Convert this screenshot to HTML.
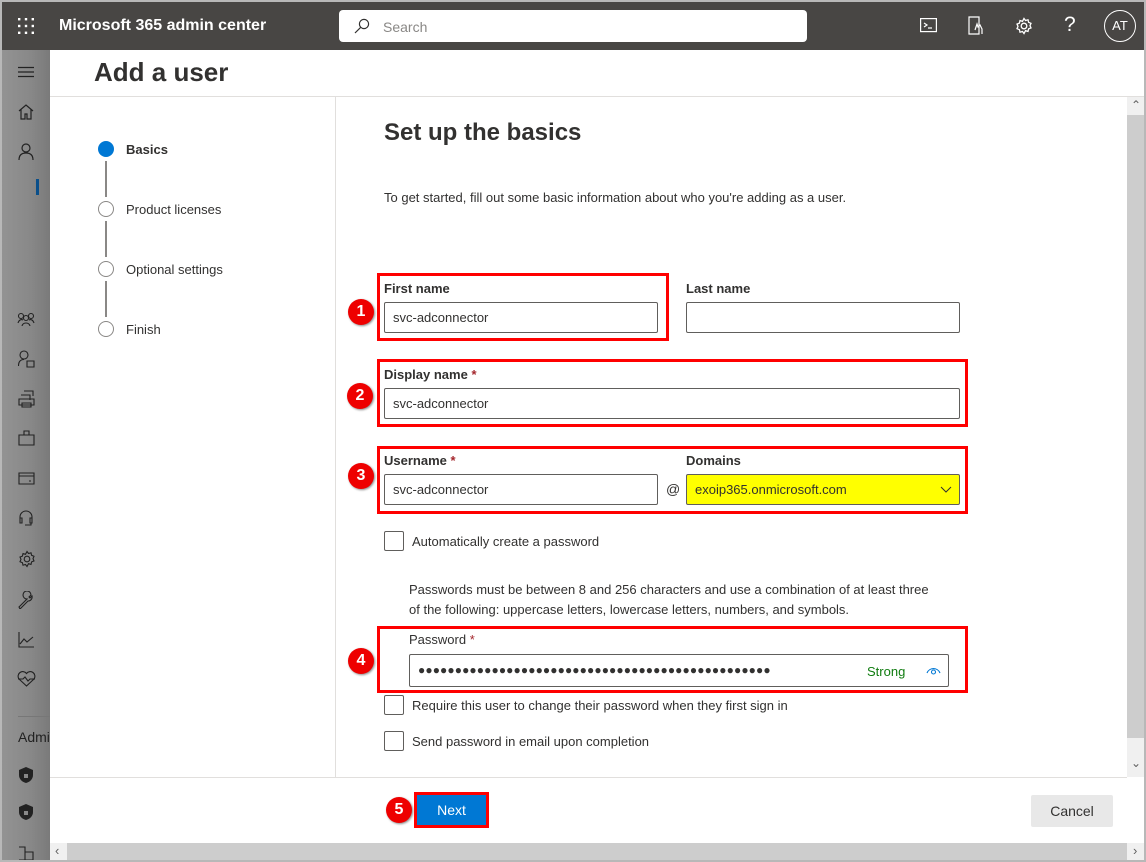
<!DOCTYPE html>
<html><head><meta charset="utf-8"><style>
*{box-sizing:border-box;margin:0;padding:0}
body{width:1146px;height:862px;position:relative;overflow:hidden;background:#fff;font-family:"Liberation Sans",sans-serif;color:#323130}
.a{position:absolute}
.top{left:0;top:0;width:1146px;height:50px;background:#484644;border:2px solid #b8b8b8;border-bottom:none}
.side{left:0;top:50px;width:50px;height:812px;background:linear-gradient(90deg,#939393 0,#888 60%,#7a7a7a 100%);border-left:2px solid #b8b8b8}
.lbl{font-size:13px;font-weight:bold;color:#323130}
.inp{border:1px solid #605e5c;border-radius:2px;height:31px;font-size:13px;padding:0 8px;line-height:29px;background:#fff}
.red{border:3px solid #f00}
.badge{width:26px;height:26px;border-radius:50%;background:#e00;color:#fff;font-weight:bold;font-family:"Liberation Sans",sans-serif;font-size:16px;text-align:center;line-height:26px;box-shadow:1px 1px 2px #888}
.cb{width:20px;height:20px;border:1px solid #605e5c;border-radius:2px;background:#fff}
.t13{font-size:13px}
.star{color:#a4262c}
</style></head><body>
<div class="a top"></div>
<svg class="a" style="left:17px;top:17px" width="18" height="18" fill="#fff"><g><rect x="1" y="1" width="2.4" height="2.4"/><rect x="7.8" y="1" width="2.4" height="2.4"/><rect x="14.6" y="1" width="2.4" height="2.4"/><rect x="1" y="7.8" width="2.4" height="2.4"/><rect x="7.8" y="7.8" width="2.4" height="2.4"/><rect x="14.6" y="7.8" width="2.4" height="2.4"/><rect x="1" y="14.6" width="2.4" height="2.4"/><rect x="7.8" y="14.6" width="2.4" height="2.4"/><rect x="14.6" y="14.6" width="2.4" height="2.4"/></g></svg>
<div class="a" style="left:59px;top:17px;color:#fff;font-weight:bold;font-size:16px">Microsoft 365 admin center</div>
<div class="a" style="left:339px;top:10px;width:468px;height:32px;background:#fff;border-radius:4px"></div>
<svg class="a" style="left:354px;top:18px" width="16" height="16" fill="none" stroke="#323130" stroke-width="1.2"><circle cx="10" cy="6" r="4.6"/><path d="M6.6 9.4 1 15"/></svg>
<div class="a" style="left:383px;top:19px;font-size:14px;color:#8a8886">Search</div>
<svg class="a" style="left:920px;top:18px" width="17" height="15" fill="none" stroke="#fff" stroke-width="1.2"><rect x="0.6" y="0.6" width="15.8" height="13"/><path d="M4 5l3 2-3 2M8 10h4"/></svg>
<svg class="a" style="left:968px;top:16px" width="16" height="19" fill="none" stroke="#fff" stroke-width="1.2"><path d="M1 1h10v17H1zM7 14l2-6 1 3 2-2 2 4v5"/></svg>
<svg class="a" style="left:1015px;top:17px" width="18" height="18" fill="none" stroke="#fff" stroke-width="1.3"><circle cx="9" cy="9" r="2.8"/><path d="M9 1.5l1.5 2 2.5-.7.6 2.5 2.4 1-1 2.3 1 2.3-2.4 1-.6 2.5-2.5-.7L9 16.5l-1.5-2-2.5.7-.6-2.5-2.4-1 1-2.3-1-2.3 2.4-1 .6-2.5 2.5.7z"/></svg>
<div class="a" style="left:1064px;top:13px;color:#fff;font-size:21px">?</div>
<div class="a" style="left:1104px;top:10px;width:32px;height:32px;border:1.5px solid #fff;border-radius:50%;color:#fff;font-size:13px;text-align:center;line-height:29px">AT</div>

<div class="a side"></div>
<svg class="a" style="left:18px;top:66px" width="16" height="12" stroke="#222" stroke-width="1.2"><path d="M0 1.5h16M0 6h16M0 10.5h16"/></svg>
<svg class="a" style="left:18px;top:104px" width="16" height="16" fill="none" stroke="#222" stroke-width="1.2"><path d="M1 7 8 1l7 6M3 5.5V15h4v-5h2v5h4V5.5"/></svg>
<svg class="a" style="left:18px;top:143px" width="16" height="17" fill="none" stroke="#222" stroke-width="1.2"><circle cx="8" cy="5" r="4"/><path d="M1 17c0-5 3-7 7-7s7 2 7 7"/></svg>
<div class="a" style="left:36px;top:179px;width:3px;height:16px;background:#0a4f8a"></div>
<svg class="a" style="left:17px;top:312px" width="18" height="14" fill="none" stroke="#222" stroke-width="1.1"><circle cx="4" cy="4" r="2.5"/><circle cx="14" cy="4" r="2.5"/><circle cx="9" cy="6" r="2.5"/><path d="M1 11c1-3 3-4 5-3M17 11c-1-3-3-4-5-3M5 14c1-4 7-4 8 0"/></svg>
<svg class="a" style="left:18px;top:350px" width="17" height="18" fill="none" stroke="#222" stroke-width="1.1"><circle cx="6" cy="5" r="4"/><path d="M0.5 16c0-5 2.5-6.5 5.5-6.5M9 11h7v6H9z"/></svg>
<svg class="a" style="left:18px;top:390px" width="17" height="18" fill="none" stroke="#222" stroke-width="1.1"><path d="M6 1h9v5M3 5h9v5M1 9h15v6H1zM4 13h9v4H4z"/></svg>
<svg class="a" style="left:18px;top:430px" width="17" height="16" fill="none" stroke="#222" stroke-width="1.1"><path d="M1 5h15v10H1zM6 5V1h5v4"/></svg>
<svg class="a" style="left:18px;top:472px" width="17" height="13" fill="none" stroke="#222" stroke-width="1.1"><path d="M1 1h15v11H1zM1 4h15M11 9h2"/></svg>
<svg class="a" style="left:19px;top:510px" width="14" height="18" fill="none" stroke="#222" stroke-width="1.1"><path d="M1 10V7a6 6 0 0 1 12 0v3M1 8h2v5H1zM11 8h2v5h-2zM12 13v2H6"/></svg>
<svg class="a" style="left:18px;top:550px" width="18" height="18" fill="none" stroke="#222" stroke-width="1.1"><circle cx="9" cy="9" r="2.8"/><path d="M9 1.5l1.5 2 2.5-.7.6 2.5 2.4 1-1 2.3 1 2.3-2.4 1-.6 2.5-2.5-.7L9 16.5l-1.5-2-2.5.7-.6-2.5-2.4-1 1-2.3-1-2.3 2.4-1 .6-2.5 2.5.7z"/></svg>
<svg class="a" style="left:18px;top:591px" width="17" height="18" fill="none" stroke="#222" stroke-width="1.1"><path d="M1 16l8-8a4 4 0 1 1 4-4l-2 2 1 1 2-2a4 4 0 0 1-4 5l-8 8z"/></svg>
<svg class="a" style="left:18px;top:631px" width="17" height="17" fill="none" stroke="#222" stroke-width="1.1"><path d="M1 1v15h15M2 13l4-5 3 3 6-5"/></svg>
<svg class="a" style="left:17px;top:671px" width="19" height="16" fill="none" stroke="#222" stroke-width="1.1"><path d="M9.5 15 2 8a4 4 0 0 1 7.5-5.5A4 4 0 0 1 17 8zM1 8h5l2-2 3 4 2-2h5"/></svg>
<div class="a" style="left:18px;top:716px;width:32px;height:1px;background:#777"></div>
<div class="a" style="left:18px;top:729px;font-size:14px;color:#222">Admi</div>
<svg class="a" style="left:19px;top:767px" width="14" height="16"><path d="M7 0 14 3v5c0 4-3 7-7 8-4-1-7-4-7-8V3z" fill="#222"/><rect x="5" y="7" width="4" height="4" fill="#888"/></svg>
<svg class="a" style="left:19px;top:804px" width="14" height="16"><path d="M7 0 14 3v5c0 4-3 7-7 8-4-1-7-4-7-8V3z" fill="#222"/><rect x="5" y="7" width="4" height="4" fill="#888"/></svg>
<svg class="a" style="left:18px;top:846px" width="16" height="14" fill="none" stroke="#222" stroke-width="1.1"><path d="M1 1h6v13M7 6h8v8H1"/></svg>

<div class="a" style="left:94px;top:57px;font-size:26px;font-weight:bold;color:#323130">Add a user</div>
<div class="a" style="left:50px;top:96px;width:1094px;height:1px;background:#e1dfdd"></div>
<div class="a" style="left:335px;top:97px;width:1px;height:680px;background:#e1dfdd"></div>
<div class="a" style="left:50px;top:777px;width:1077px;height:1px;background:#e1dfdd"></div>
<div class="a" style="left:1127px;top:97px;width:17px;height:680px;background:#f0f0f0"></div>
<div class="a" style="left:1127px;top:115px;width:17px;height:623px;background:#cdcdcd"></div>
<div class="a" style="left:1131px;top:98px;font-size:12px;color:#606060">&#8963;</div>
<div class="a" style="left:1131px;top:756px;font-size:12px;color:#606060">&#8964;</div>
<div class="a" style="left:50px;top:843px;width:1094px;height:17px;background:#f0f0f0"></div>
<div class="a" style="left:67px;top:843px;width:1060px;height:17px;background:#cdcdcd"></div>
<div class="a" style="left:55px;top:843px;font-size:13px;color:#606060">&lsaquo;</div>
<div class="a" style="left:1133px;top:843px;font-size:13px;color:#606060">&rsaquo;</div>
<div class="a" style="left:1144px;top:0;width:2px;height:862px;background:#b8b8b8"></div>
<div class="a" style="left:0;top:860px;width:1146px;height:2px;background:#b8b8b8"></div>

<div class="a" style="left:98px;top:141px;width:16px;height:16px;border-radius:50%;background:#0078d4"></div>
<div class="a" style="left:105px;top:161px;width:2px;height:36px;background:#8a8886"></div>
<div class="a" style="left:98px;top:201px;width:16px;height:16px;border-radius:50%;border:1.5px solid #8a8886"></div>
<div class="a" style="left:105px;top:221px;width:2px;height:36px;background:#8a8886"></div>
<div class="a" style="left:98px;top:261px;width:16px;height:16px;border-radius:50%;border:1.5px solid #8a8886"></div>
<div class="a" style="left:105px;top:281px;width:2px;height:36px;background:#8a8886"></div>
<div class="a" style="left:98px;top:321px;width:16px;height:16px;border-radius:50%;border:1.5px solid #8a8886"></div>
<div class="a t13" style="left:126px;top:142px;font-weight:bold">Basics</div>
<div class="a t13" style="left:126px;top:202px">Product licenses</div>
<div class="a t13" style="left:126px;top:262px">Optional settings</div>
<div class="a t13" style="left:126px;top:322px">Finish</div>

<div class="a" style="left:384px;top:119px;font-size:24px;font-weight:bold">Set up the basics</div>
<div class="a t13" style="left:384px;top:190px">To get started, fill out some basic information about who you're adding as a user.</div>

<div class="a red" style="left:377px;top:273px;width:292px;height:68px"></div>
<div class="a lbl" style="left:384px;top:281px">First name</div>
<div class="a inp" style="left:384px;top:302px;width:274px">svc-adconnector</div>
<div class="a lbl" style="left:686px;top:281px">Last name</div>
<div class="a inp" style="left:686px;top:302px;width:274px"></div>
<div class="a badge" style="left:348px;top:299px">1</div>

<div class="a red" style="left:377px;top:359px;width:591px;height:68px"></div>
<div class="a lbl" style="left:384px;top:367px">Display name <span class="star">*</span></div>
<div class="a inp" style="left:384px;top:388px;width:576px">svc-adconnector</div>
<div class="a badge" style="left:347px;top:383px">2</div>

<div class="a red" style="left:377px;top:446px;width:591px;height:68px"></div>
<div class="a lbl" style="left:384px;top:453px">Username <span class="star">*</span></div>
<div class="a lbl" style="left:686px;top:453px">Domains</div>
<div class="a inp" style="left:384px;top:474px;width:274px">svc-adconnector</div>
<div class="a" style="left:666px;top:481px;font-size:14px">@</div>
<div class="a inp" style="left:686px;top:474px;width:274px;background:#ff0">exoip365.onmicrosoft.com</div>
<svg class="a" style="left:940px;top:486px" width="12" height="8" fill="none" stroke="#323130" stroke-width="1"><path d="M1 1l5 5 5-5"/></svg>
<div class="a badge" style="left:348px;top:463px">3</div>

<div class="a cb" style="left:384px;top:531px"></div>
<div class="a t13" style="left:412px;top:534px">Automatically create a password</div>
<div class="a t13" style="left:409px;top:580px;line-height:20px">Passwords must be between 8 and 256 characters and use a combination of at least three<br>of the following: uppercase letters, lowercase letters, numbers, and symbols.</div>

<div class="a red" style="left:377px;top:626px;width:591px;height:67px"></div>
<div class="a lbl" style="left:409px;top:632px;font-weight:normal">Password <span class="star">*</span></div>
<div class="a inp" style="left:409px;top:654px;width:540px;height:33px;font-size:12px;letter-spacing:0.1px;line-height:31px;padding-left:8px;color:#323130">●●●●●●●●●●●●●●●●●●●●●●●●●●●●●●●●●●●●●●●●●●●●●●●●</div>
<div class="a t13" style="left:867px;top:664px;color:#107c10">Strong</div>
<svg class="a" style="left:926px;top:665px" width="15" height="10" fill="none" stroke="#0078d4" stroke-width="1.1"><path d="M1 8a7 7 0 0 1 13 0"/><circle cx="7.5" cy="7" r="2"/></svg>
<div class="a badge" style="left:348px;top:648px">4</div>

<div class="a cb" style="left:384px;top:695px"></div>
<div class="a t13" style="left:412px;top:698px">Require this user to change their password when they first sign in</div>
<div class="a cb" style="left:384px;top:731px"></div>
<div class="a t13" style="left:412px;top:734px">Send password in email upon completion</div>

<div class="a" style="left:414px;top:792px;width:75px;height:36px;border:3px solid #f00;background:#0078d4;color:#fff;font-size:14px;text-align:center;line-height:30px">Next</div>
<div class="a badge" style="left:386px;top:797px">5</div>
<div class="a" style="left:1031px;top:795px;width:82px;height:32px;background:#e8e8e8;border-radius:2px;font-size:14px;text-align:center;line-height:32px">Cancel</div>
</body></html>
